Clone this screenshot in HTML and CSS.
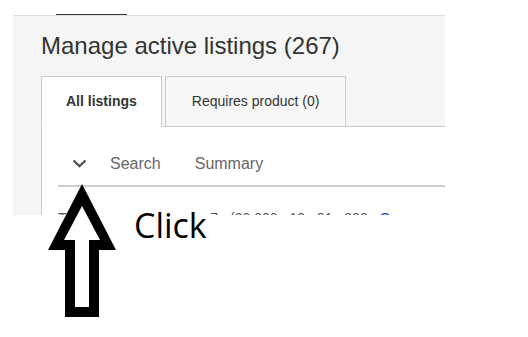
FILE: index.html
```html
<!DOCTYPE html>
<html lang="en">
<head>
    <meta charset="UTF-8">
    <meta name="viewport" content="width=device-width, initial-scale=1.0">
    <title>Manage active listings</title>
    <link rel="stylesheet" href="styles.css">
</head>
<body>
    <div class="shot">
        <div class="topbar">
            <div class="nav-underline"></div>
        </div>

        <div class="page">
            <h1 class="page-title">Manage active listings (267)</h1>

            <div class="tabs">
                <div class="tab active">All listings</div>
                <div class="tab">Requires product (0)</div>
            </div>

            <div class="panel">
                <div class="toolbar">
                    <svg class="chevron" width="15" height="9" viewBox="0 0 15 9">
                        <polyline points="1.5,1.5 7.5,7.2 13.5,1.5" fill="none" stroke="#555" stroke-width="2.4"/>
                    </svg>
                    <span class="toolbar-item search">Search</span>
                    <span class="toolbar-item summary">Summary</span>
                </div>
                <div class="results-row">
                    <span>T</span>
                    <span class="results-count">Results 267 (20,000 10 01 200 <span class="link">G</span></span>
                </div>
            </div>
        </div>
    </div>

    <svg class="arrow" width="68" height="133" viewBox="0 0 68 133">
        <path fill="#000" fill-rule="evenodd"
              d="M34 0 L0 66 L17 66 L17 133 L51 133 L51 66 L68 66 Z
                 M34 22 L16 56 L27 56 L27 123 L41 123 L41 56 L52 56 Z"/>
    </svg>
    <div class="click-label">Click</div>
</body>
</html>
```

FILE: styles.css
```css
body {
    margin: 0;
    background-color: #fff;
    font-family: "Liberation Sans", Arial, sans-serif;
    position: relative;
    width: 528px;
    height: 337px;
    overflow: hidden;
}

.shot {
    width: 445px;
    height: 215px;
    overflow: hidden;
}

.topbar {
    height: 15px;
    padding-left: 56px;
}

.nav-underline {
    width: 71px;
    height: 14px;
    border-bottom: 1px solid #333;
}

.page {
    margin-left: 13px;
    padding: 16px 0 0 28px;
    height: 300px;
    background-color: #f5f5f5;
    border-top: 1px solid #ddd;
}

.page-title {
    margin: 0 0 16px 0;
    font-size: 24px;
    font-weight: normal;
    line-height: 28px;
    color: #333;
}

.tabs {
    display: flex;
    gap: 3px;
    margin-bottom: -1px;
}

.tab {
    height: 49px;
    line-height: 49px;
    padding: 0 26px;
    font-size: 14px;
    color: #333;
    background-color: #f7f7f7;
    border: 1px solid #ccc;
}

.tab.active {
    padding: 0 24px;
    font-weight: bold;
    background-color: #fff;
    border-bottom-color: #fff;
}

.panel {
    background-color: #fff;
    border-top: 1px solid #ccc;
    border-left: 1px solid #ccc;
    height: 200px;
}

.toolbar {
    display: flex;
    align-items: center;
    margin-left: 16px;
    padding: 27px 0 12px 14px;
    height: 19px;
    border-bottom: 2px solid #ccc;
}

.chevron {
    display: block;
}

.toolbar-item {
    font-size: 16px;
    line-height: 19px;
    color: #666;
}

.search {
    margin-left: 23px;
}

.summary {
    margin-left: 34px;
}

.results-row {
    margin-left: 16px;
    padding-top: 23px;
    font-size: 14px;
    line-height: 16px;
    color: #555;
    white-space: nowrap;
}

.results-count {
    margin-left: 66px;
    word-spacing: 8px;
}

.link {
    color: #0654ba;
}

.arrow {
    position: absolute;
    left: 48px;
    top: 184px;
}

.click-label {
    position: absolute;
    left: 130px;
    top: 208px;
    padding: 0 4px;
    background-color: #fff;
    font-family: "Open Sans", sans-serif;
    font-size: 34px;
    line-height: 34px;
    color: #000;
}
```
